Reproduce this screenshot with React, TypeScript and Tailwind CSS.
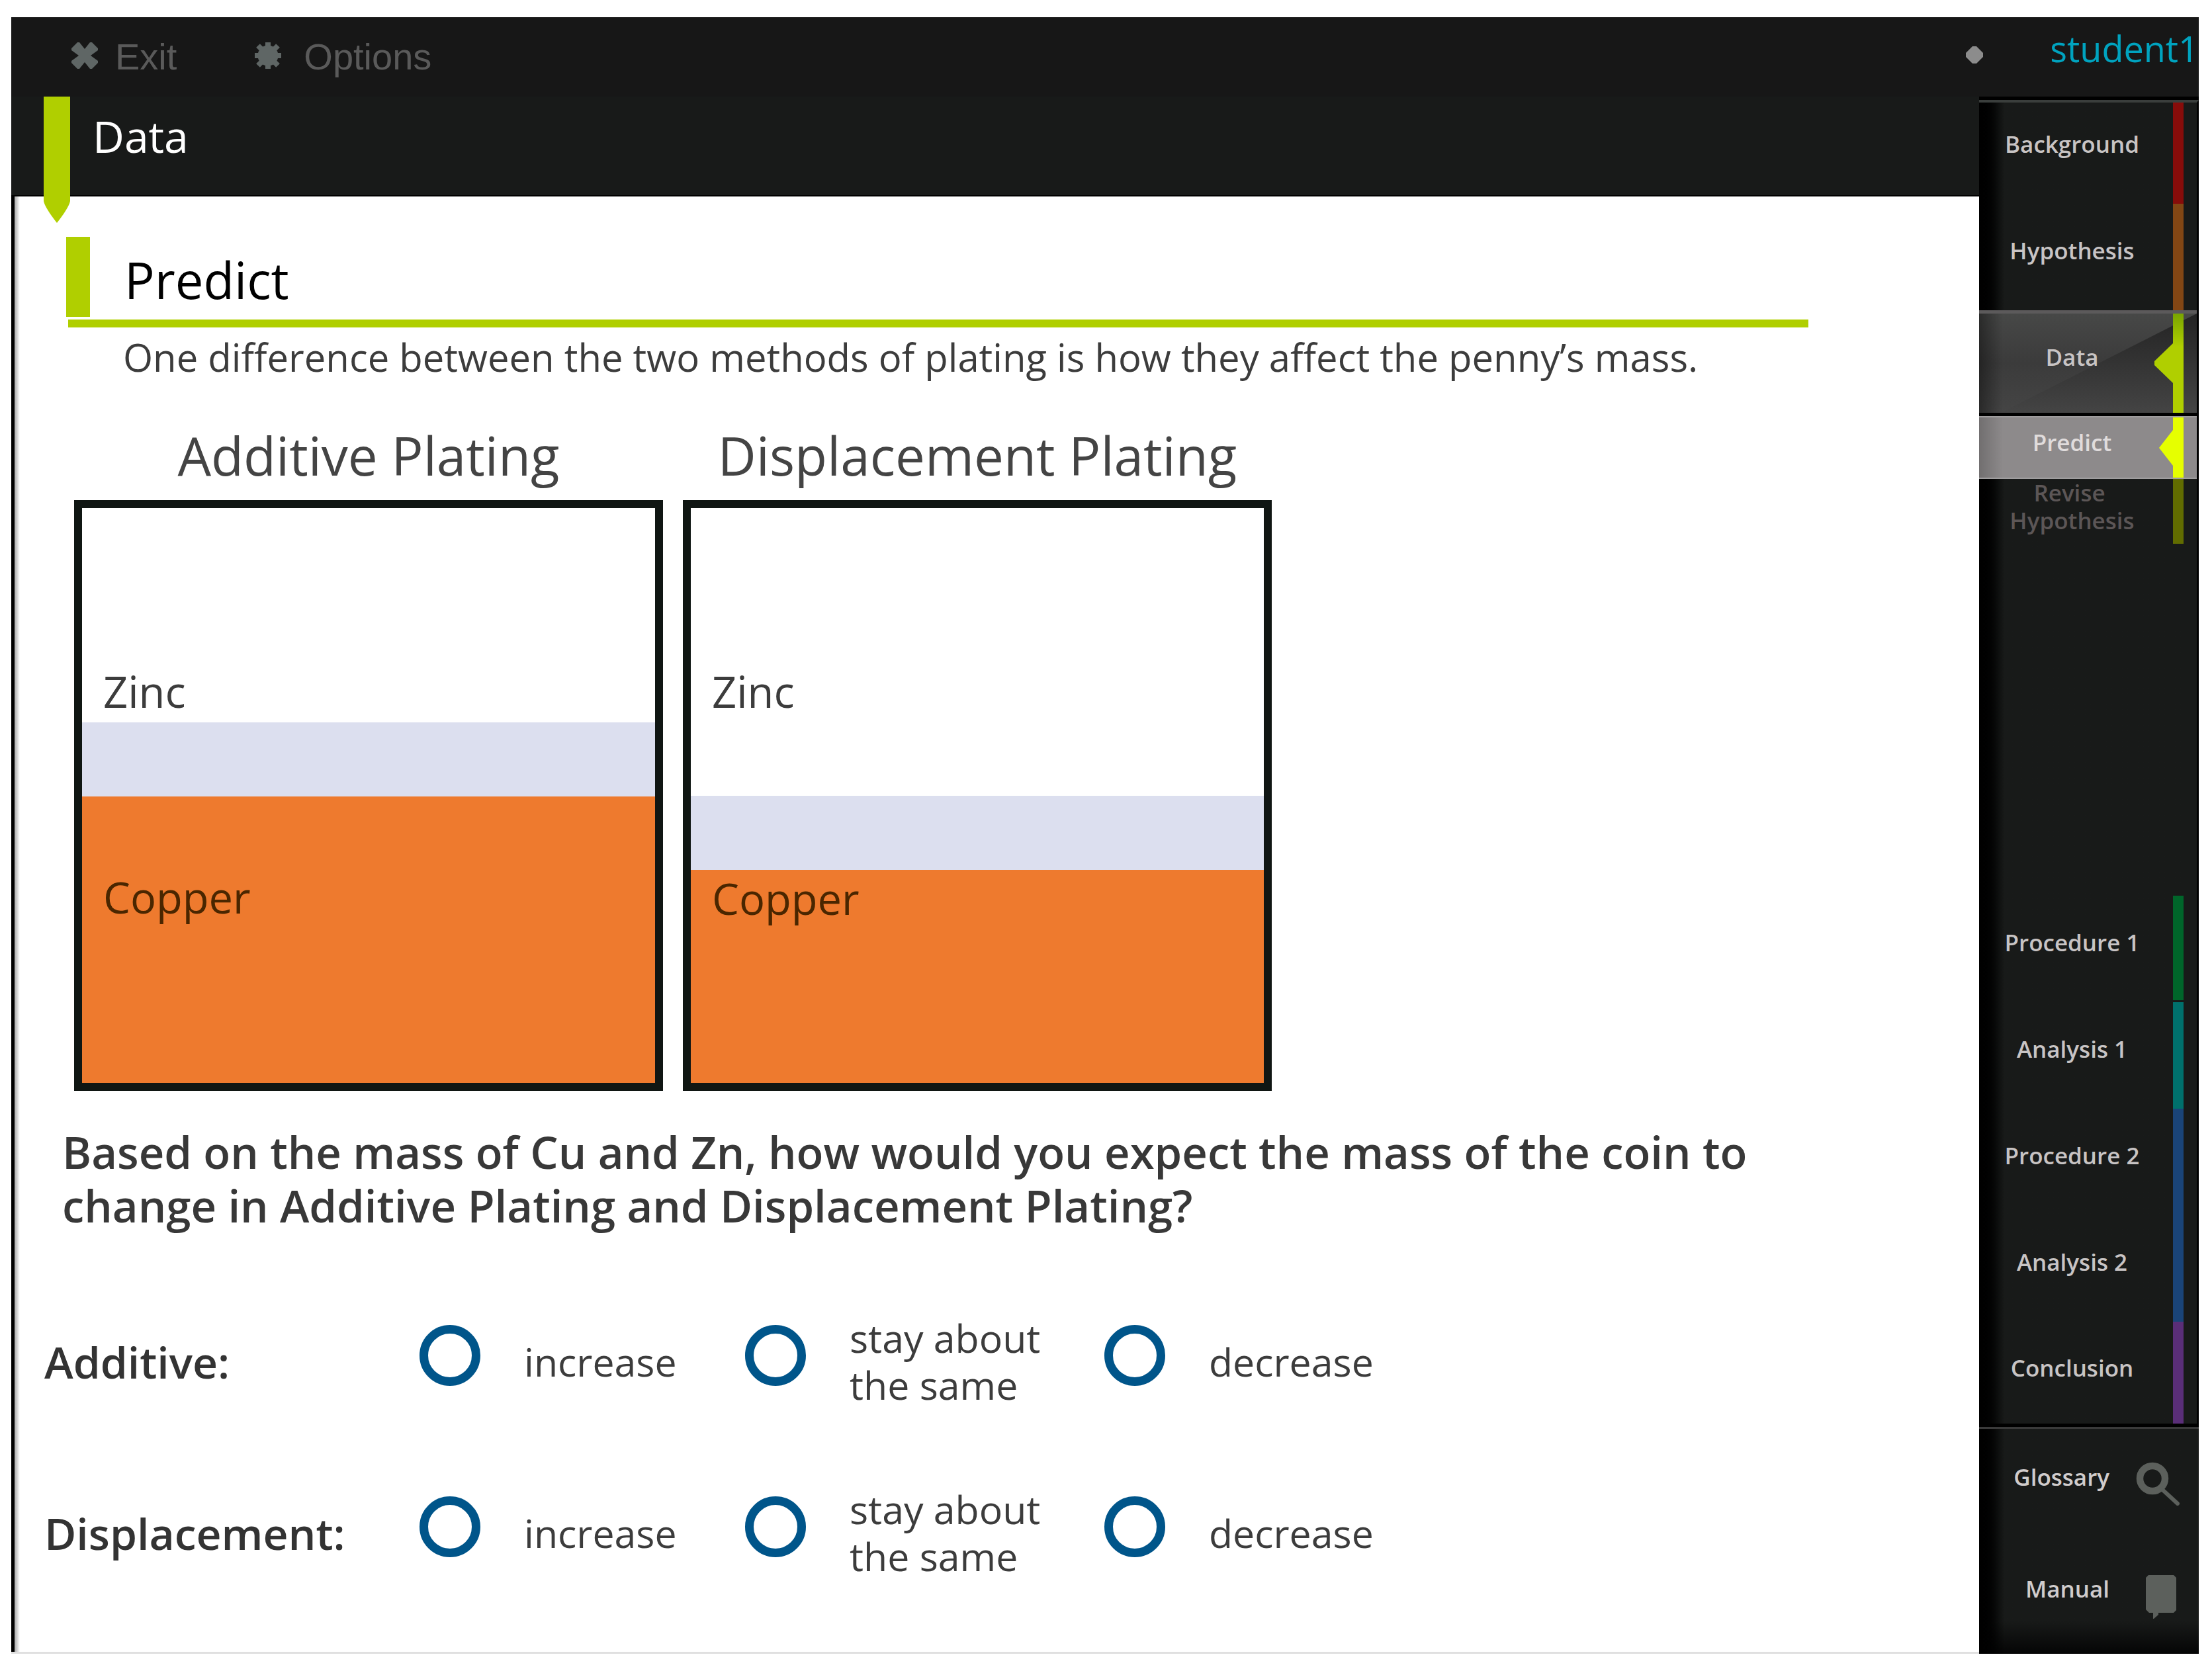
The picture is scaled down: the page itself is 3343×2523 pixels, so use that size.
type NavItem = { label: string; strip: string };

const laterSteps: NavItem[] = [
  { label: "Procedure 1", strip: "bg-[#00652a] border-b-3 border-[#181a19]" },
  { label: "Analysis 1", strip: "bg-[#00706c]" },
  { label: "Procedure 2", strip: "bg-[#1a4478]" },
  { label: "Analysis 2", strip: "bg-[#1a4478]" },
];

const choices = ["increase", "stay about the same", "decrease"];

function NavRow({ label, strip, height, pad }: NavItem & { height: string; pad: string }) {
  return (
    <li className={`flex ${height}`}>
      <button type="button" className={`flex-1 pr-3 text-center leading-[45px] ${pad}`}>
        <span className="block">{label}</span>
      </button>
      <span className={`mr-5 w-4 ${strip}`} />
    </li>
  );
}

function Figure({ title, air, copperPad }: { title: string; air: string; copperPad: string }) {
  return (
    <figure className="w-[890px]">
      <figcaption className="text-center text-[80px] leading-[136px] text-[#444]">{title}</figcaption>
      <div className="flex h-[893px] flex-col border-12 border-[#101613] text-[65px]">
        <div className={`pt-[230px] pl-8 leading-[94px] text-[#3c3c3c] ${air}`}>Zinc</div>
        <div className="h-[112px] bg-[#dcdfef]" />
        <div className={`flex-1 bg-[#ee7a2e] pl-8 leading-[86px] text-[#4a2600] ${copperPad}`}>Copper</div>
      </div>
    </figure>
  );
}

function ChoiceRow({ name, label }: { name: string; label: string }) {
  return (
    <div
      role="radiogroup"
      aria-labelledby={`${name}-label`}
      className="grid h-[142px] grid-cols-[567px_492px_543px_auto] items-center text-[#3c3c3c]"
    >
      <div id={`${name}-label`} className="text-[66px] font-semibold text-[#333]">
        {label}
      </div>
      {choices.map((choice) => (
        <div key={choice} className="flex items-center gap-[66px]">
          <input
            type="radio"
            id={`${name}-${choice}`}
            name={name}
            className="mb-[18px] size-[92px] shrink-0 appearance-none rounded-full border-[13px] border-[#00558a] checked:bg-[#00558a]/40"
          />
          <label htmlFor={`${name}-${choice}`} className="max-w-[310px] text-[59px] leading-[71px]">
            {choice}
          </label>
        </div>
      ))}
    </div>
  );
}

export default function App() {
  return (
    <div className="flex min-h-screen flex-col bg-white pt-[26px] pr-5 pb-[23px] pl-[17px] font-['Open_Sans',sans-serif]">
      <header className="flex h-30 items-center bg-[#171717] pl-[91px]">
        <div className="flex items-center gap-[118px] font-['Liberation_Sans',sans-serif] text-[56px] text-[#5a5a5a]">
          <button type="button" className="flex items-center gap-[26px]">
            <svg viewBox="0 0 40 40" className="mb-1 size-10" fill="#5f6665">
              <path d="M9 0h3l8 10 8-10h3l9 9v3L29 20l11 8v3l-9 9h-3l-8-10-8 10H9l-9-9v-3l11-8L0 12V9z" />
            </svg>
            Exit
          </button>
          <button type="button" className="flex items-center gap-[34px]">
            <svg viewBox="0 0 40 40" className="mb-1 size-10" fill="#5f6665">
              <circle cx="20" cy="20" r="15.500" />
              <path stroke="#5f6665" strokeWidth="8" d="M20 0v40M0 20h40M5 5l30 30M35 5 5 35" />
            </svg>
            Options
          </button>
        </div>
        <div className="ml-auto flex h-full items-start gap-[100px]">
          <svg viewBox="0 0 28 28" className="mb-1.5 size-7 self-center" fill="#8c8c8c">
            <path d="M11 1h6l10 10v6L17 27h-6L1 17v-6z" />
          </svg>
          <a href="#student" className="text-[54px] leading-[94px] text-[#00a3bf]">
            student1
          </a>
        </div>
      </header>

      <div className="flex flex-1">
        <main className="flex flex-1 flex-col border-b-3 border-[#e0e0e0]">
          <div className="relative h-[151px] border-b-2 border-black bg-[#181a19] pl-[123px]">
            <h1 className="text-[66px] leading-[118px] text-white">Data</h1>
            <svg viewBox="0 0 40 191" className="absolute top-0 left-[49px] h-[191px] w-10" fill="#b0cf00">
              <path d="M0 0h40v158q-2 10-20 33Q2 168 0 158z" />
            </svg>
          </div>

          <div className="flex flex-1 border-l-5 border-black">
            <div className="w-2 bg-linear-to-r from-[#aaa] to-white" />
            <div className="flex-1 pt-[61px] pb-24">
              <div className="flex h-[121px] pl-[70px]">
                <div className="w-9 bg-[#b0cf00]" />
                <h2 className="ml-[52px] pt-2 text-[76px] leading-[113px] text-black">Predict</h2>
              </div>
              <hr className="mt-1 mr-[258px] ml-[73px] h-3 border-0 bg-[#b0cf00]" />
              <p className="pl-[156px] text-[58px] leading-[90px] text-[#3c3c3c]">
                One difference between the two methods of plating is how they affect the penny’s mass.
              </p>

              <div className="mt-[35px] flex gap-[30px] pl-[82px]">
                <Figure title="Additive Plating" air="h-[324px]" copperPad="pt-[109px]" />
                <Figure title="Displacement Plating" air="h-[435px]" copperPad="" />
              </div>

              <p className="mt-[52px] ml-[64px] max-w-[2640px] text-[67px] leading-[81px] font-semibold text-[#383838]">
                Based on the mass of Cu and Zn, how would you expect the mass of the coin to change in Additive Plating and Displacement Plating?
              </p>

              <div className="mt-[124px] flex flex-col gap-[117px] pl-[37px]">
                <ChoiceRow name="additive" label="Additive:" />
                <ChoiceRow name="displacement" label="Displacement:" />
              </div>
            </div>
          </div>
        </main>

        <aside className="flex w-[332px] flex-col border-t-5 border-black bg-linear-to-r from-black to-[#181a19] to-[38px] text-[35px] font-semibold text-[#c8c4c4]">
          <nav className="flex flex-1 flex-col border-t-4 border-r-3 border-t-[#3a3e3c] border-r-black">
            <ul>
              <NavRow label="Background" strip="bg-[#870c0a]" height="h-[153px]" pad="pb-7" />
              <NavRow label="Hypothesis" strip="bg-[#824614]" height="h-[161px]" pad="pb-5" />
              <li className="relative flex h-[160px] border-t-5 border-b-5 border-t-[#5c5a5b] border-b-black bg-linear-to-b from-[#474847] via-[#3b3b3b] to-[#454545]">
                <span className="absolute inset-0 bg-linear-to-b from-[#242424] to-[#444] [clip-path:polygon(100%_0,100%_100%,10%_100%)]" />
                <span className="absolute inset-y-0 left-0 w-9 bg-linear-to-r from-black/40 to-transparent" />
                <button type="button" aria-current="step" className="relative flex-1 pr-3 pb-5 leading-[45px]">
                  Data
                </button>
                <span className="relative mr-5 w-4 bg-linear-to-b from-[#79a500] to-[#b0cf00] to-[50px]">
                  <svg viewBox="0 0 28 60" className="absolute top-[45px] right-full h-[60px] w-7" fill="#b0cf00">
                    <path d="M28 0v60L0 33v-6z" />
                  </svg>
                </span>
              </li>
              <li className="relative flex h-[95px] border-y-2 border-[#a09e9f] bg-[#8d8a8b]">
                <span className="absolute inset-y-0 left-0 w-9 bg-linear-to-r from-black/20 to-transparent" />
                <button type="button" aria-current="page" className="relative flex-1 pr-3 pb-4 leading-[45px] text-[#e0dcdc]">
                  Predict
                </button>
                <span className="relative mr-5 w-4 bg-[#e6ff00]">
                  <svg viewBox="0 0 21 54" className="absolute top-[19px] right-full h-[54px] w-[21px]" fill="#e6ff00">
                    <path d="M21 0v54L0 27z" />
                  </svg>
                </span>
              </li>
              <li className="flex h-[98px]">
                <button type="button" className="flex-1 self-start pr-3 leading-[42px] text-[#5c5656]">
                  <span className="block pr-2">Revise</span>
                  <span className="block">Hypothesis</span>
                </button>
                <span className="mr-5 w-4 bg-[#616c00]" />
              </li>
            </ul>
            <ul className="mt-auto">
              {laterSteps.map((step) => (
                <NavRow key={step.label} {...step} height="h-[161px]" pad="pb-5" />
              ))}
              <NavRow label="Conclusion" strip="bg-[#5a2e78]" height="h-[154px]" pad="pb-4" />
            </ul>
          </nav>

          <div className="border-t-5 border-black">
            <div className="flex flex-col gap-[103px] border-t-3 border-[#3a3a3a] bg-linear-to-t from-black/80 to-transparent to-[50px] pt-[50px] pb-[49px] text-[#d0cccc]">
              <button type="button" className="flex items-start gap-10">
                <span className="w-[197px] text-right leading-[45px]">Glossary</span>
                <svg viewBox="0 0 66 66" className="size-[66px]" fill="none" stroke="#5c605c">
                  <circle cx="25" cy="25" r="19" strokeWidth="10.500" />
                  <path d="M38 40 63 63" strokeWidth="6" strokeLinecap="round" />
                </svg>
              </button>
              <button type="button" className="flex items-start gap-10">
                <span className="w-[197px] text-right leading-[45px]">Manual</span>
                <svg viewBox="0 0 66 72" className="h-[72px] w-[66px]" fill="#5c605c">
                  <path d="M19 2h38l4 4v49l-4 4H34v3l-7 6h-1v-9h-6l-5-5V6z" />
                </svg>
              </button>
            </div>
          </div>
        </aside>
      </div>
    </div>
  );
}
